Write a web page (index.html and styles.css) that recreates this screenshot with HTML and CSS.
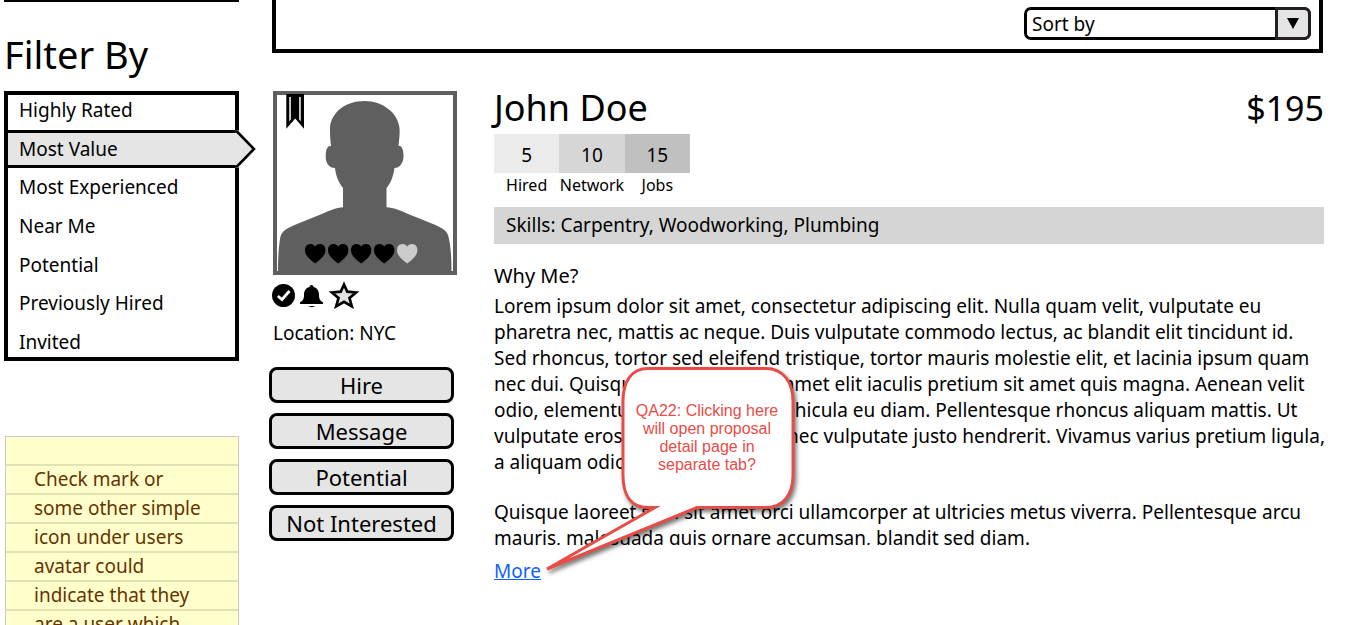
FILE: index.html
```html
<!DOCTYPE html>
<html lang="en">
<head>
<meta charset="utf-8">
<title>Proposals</title>
<link rel="stylesheet" href="styles.css">
</head>
<body>
<div class="page">
  <aside class="sidebar">
    <div class="panel-end"></div>
    <h2 class="filter-title">Filter By</h2>
    <ul class="filters">
      <li><a href="#">Highly Rated</a></li>
      <li class="selected"><a href="#">Most Value</a>
        <svg class="pointer" width="22" height="38" viewBox="0 0 22 38" aria-hidden="true"><path d="M0 0H3L20 19L3 38H0Z" fill="#e5e5e5"/><path d="M0 1.5H2L19 19L2 36.5H0" fill="none" stroke="#000" stroke-width="2.6"/></svg>
      </li>
      <li><a href="#">Most Experienced</a></li>
      <li><a href="#">Near Me</a></li>
      <li><a href="#">Potential</a></li>
      <li><a href="#">Previously Hired</a></li>
      <li><a href="#">Invited</a></li>
    </ul>
    <div class="note">Check mark or<br>some other simple<br>icon under users<br>avatar could<br>indicate that they<br>are a user which</div>
  </aside>

  <main class="main">
    <div class="toolbar">
      <div class="sort">
        <select class="sort-select" aria-label="Sort by"><option>Sort by</option></select>
        <span class="sort-arrow"><svg width="12" height="11" viewBox="0 0 12 11" aria-hidden="true"><path d="M0 0H12L6 11Z"/></svg></span>
      </div>
    </div>

    <article class="profile">
      <div class="card">
        <svg class="avatar" viewBox="0 0 184 184" role="img" aria-label="Avatar, rated 4 of 5">
          <rect x="2" y="2" width="180" height="180" fill="#fff" stroke="#5f5f5f" stroke-width="4"/>
          <path fill="#5f5f5f" d="M58 55C57 48 57 42 57 37C58 21 73 10 91.500 10C110 10 125 22 126.500 37C127 43 126 49 125.500 55C128 54 130.500 58 130.500 64C131 71 127 77 121.500 77C120 86 118 92 113.500 97V116.300C121 117 126 119 134 122.500L160 133C170 137 175 140 176 148C178 158 178.500 168 178.500 181H5C5 168 5.500 158 7 148C8 140 14 137 24 133L50 122.500C58 119 63 117 70 116.300V97C66 92 63 86 62 77C56 77 52.700 72 52.700 66C52.700 59 54 54.500 58 55Z"/>
          <path d="M13.300 3H31V37.700L22.200 27.500L13.300 37.700Z"/>
          <path d="M16.300 6H17.800V28.500L16.300 30.500ZM26.200 6H27.700V30.500L26.200 28.500Z" fill="#fff"/>
          <defs><path id="heart" d="M10.200 19.500C6 16 0 12.500 0 6C0 2 2.500 0 5.500 0C7.800 0 9.300 1 10.200 2.700C11.100 1 12.600 0 14.900 0C18 0 20.400 2 20.400 6C20.400 12.500 14.400 16 10.200 19.500Z"/></defs>
          <use href="#heart" x="32" y="153"/><use href="#heart" x="55" y="153"/><use href="#heart" x="78" y="153"/><use href="#heart" x="101" y="153"/><use href="#heart" x="124" y="153" fill="#ccc"/>
        </svg>
        <div class="badges">
          <svg width="24" height="28" viewBox="0 0 24 28" aria-hidden="true"><circle cx="11.500" cy="14.500" r="11.500"/><path d="M5.800 15L10 18.500L17.500 10" fill="none" stroke="#fff" stroke-width="2.800"/></svg>
          <svg width="24" height="28" viewBox="0 0 24 28" aria-hidden="true"><path d="M11.500 4C12.800 4 13.300 4.800 13.500 6C17.500 7 19 10 19 14C19 18 20 19.500 23 21.300V23H0V21.300C3 19.500 4 18 4 14C4 10 5.500 7 9.500 6C9.700 4.800 10.200 4 11.500 4ZM8 25H15.500Q11.500 27.300 8 25Z"/></svg>
          <svg width="32" height="28" viewBox="0 0 32 28" aria-hidden="true"><path d="M16 3.500L19.300 10.700L28 11.500L21.500 17L23.800 25.300L16 20.800L8.200 25.300L10.500 17L4 11.500L12.700 10.700Z" fill="#e2e2e2" stroke="#000" stroke-width="2.700"/></svg>
        </div>
        <p class="location">Location: NYC</p>
        <div class="actions">
          <button type="button">Hire</button>
          <button type="button">Message</button>
          <button type="button">Potential</button>
          <button type="button">Not Interested</button>
        </div>
      </div>

      <div class="details">
        <header class="heading"><h1>John Doe</h1><span class="price">$195</span></header>
        <dl class="stats">
          <div><dd class="hired">5</dd><dt>Hired</dt></div>
          <div><dd class="network">10</dd><dt>Network</dt></div>
          <div><dd class="jobs">15</dd><dt>Jobs</dt></div>
        </dl>
        <p class="skills">Skills: Carpentry, Woodworking, Plumbing</p>
        <h3 class="why">Why Me?</h3>
        <div class="pitch">
          <div class="excerpt">
            <p>Lorem ipsum dolor sit amet, consectetur adipiscing elit. Nulla quam velit, vulputate eu<br>pharetra nec, mattis ac neque. Duis vulputate commodo lectus, ac blandit elit tincidunt id.<br>Sed rhoncus, tortor sed eleifend tristique, tortor mauris molestie elit, et lacinia ipsum quam<br>nec dui. Quisque nec tempus sit amet elit iaculis pretium sit amet quis magna. Aenean velit<br>odio, elementum in tempus ut, vehicula eu diam. Pellentesque rhoncus aliquam mattis. Ut<br>vulputate eros sed lacus sodales nec vulputate justo hendrerit. Vivamus varius pretium ligula,<br>a aliquam odio euismod.</p>
            <p>Quisque laoreet sem sit amet orci ullamcorper at ultricies metus viverra. Pellentesque arcu<br>mauris, malesuada quis ornare accumsan, blandit sed diam.</p>
          </div>
          <div class="callout">
            <svg width="262" height="218" viewBox="0 0 262 218" aria-hidden="true"><path d="M108 5.500H226C243 5.500 253 19 253 38V112C253 132 243 144.500 226 144.500H157L7 206L115 144.500H108C91 144.500 83 132 83 112V38C83 19 91 5.500 108 5.500Z" fill="#fff" stroke="#e84c46" stroke-width="3" stroke-miterlimit="6"/></svg>
            <p>QA22: Clicking here<br>will open proposal<br>detail page in<br>separate tab?</p>
          </div>
        </div>
        <a class="more" href="#">More</a>
      </div>
    </article>
  </main>
</div>
</body>
</html>
```
FILE: styles.css
```css
* { box-sizing: border-box; }

body {
  margin: 0;
  height: 100vh;
  overflow: hidden;
  background: #fff;
  color: #000;
  font: 19px/26px "Noto Sans", sans-serif;
}

h1, h2, h3, p, ul, dl, dd { margin: 0; padding: 0; font-weight: 400; }

.page { display: flex; gap: 33px; padding: 0 26px 0 4px; }

.sidebar { flex: 0 0 235px; }
.panel-end { height: 2px; background: #000; }
.filter-title { padding: 32px 0 17px; font-size: 38px; line-height: 40px; }

.filters {
  display: flex;
  flex-direction: column;
  justify-content: space-between;
  min-height: 270px;
  padding: 4px 0;
  border: 4px solid #000;
  list-style: none;
}
.filters li { position: relative; padding-left: 11px; line-height: 22px; }
.filters a { position: relative; color: inherit; text-decoration: none; }
.selected::before {
  content: "";
  position: absolute;
  inset: -8px 0;
  border: solid #000;
  border-width: 3px 0;
  background: #e5e5e5;
}
.pointer { position: absolute; top: -8px; right: -22px; }

.note {
  margin: 75px 0 0 1px;
  padding: 28px 28px 29px;
  border: 1px solid #c8c8c8;
  background: #ffc repeating-linear-gradient(#0000 0 27px, #e2e2b4 27px 29px);
  color: #630;
  line-height: 29px;
  white-space: nowrap;
}

.main { flex: 1; min-width: 0; }
.toolbar {
  display: flex;
  justify-content: flex-end;
  padding: 7px 8px 9px;
  border: solid #000;
  border-width: 0 4px 4px;
}
.sort { position: relative; flex: 0 1 287px; }
.sort-select {
  display: block;
  width: 100%;
  height: 33px;
  padding: 0 40px 0 5px;
  border: 3px solid #000;
  border-radius: 7px;
  background: #fff;
  color: #000;
  font: inherit;
  appearance: none;
}
.sort-arrow {
  position: absolute;
  inset: 0 0 0 auto;
  display: grid;
  place-items: center;
  width: 36px;
  border: 3px solid #231f20;
  border-radius: 0 7px 7px 0;
  background: #e5e5e5;
  pointer-events: none;
}

.profile { display: flex; gap: 37px; padding: 38px 0 0 1px; }
.card { flex: 0 0 184px; }
.avatar { display: block; width: 184px; }
.badges { display: flex; gap: 4px; margin-left: -1px; padding-top: 6px; }
.location { padding-top: 11px; }
.actions { display: grid; gap: 10px; margin: 21px 3px 0 -4px; }
.actions button {
  height: 36px;
  padding: 0;
  border: 3px solid #000;
  border-radius: 8px;
  background: #e5e5e5;
  color: #000;
  font: 22px/28px "Noto Sans", sans-serif;
}

.details { flex: 1; min-width: 0; margin-right: -1px; }
.heading { display: flex; justify-content: space-between; padding-bottom: 9px; line-height: 34px; }
.heading h1 { font-size: 36px; }
.price { font-size: 34px; }
.stats { display: grid; grid-template-columns: repeat(3, 1fr); width: 196px; text-align: center; }
.stats div { display: flex; flex-direction: column; }
.stats dd { height: 39px; line-height: 43px; }
.stats dt { font-size: 16px; line-height: 24px; }
.hired { background: #ebebeb; }
.network { background: #d6d6d6; }
.jobs { background: #c0c0c0; }
.skills { margin-top: 10px; padding: 5px 12px 6px; background: #d5d5d5; }
.why { padding: 19px 0 4px; font-size: 20px; line-height: 26px; }

.pitch { position: relative; }
.excerpt { display: grid; gap: 24px; max-height: 252px; overflow: hidden; white-space: nowrap; }
.callout { position: absolute; top: 70px; left: 46px; }
.callout svg { display: block; filter: drop-shadow(2px 3px 2px #0008); }
.callout p {
  position: absolute;
  inset: 39px 8px auto 80px;
  color: #e84c46;
  font: 16px/18px "Liberation Sans", sans-serif;
  text-align: center;
}
.more { display: inline-block; padding-top: 13px; color: #0f5fff; }
```
